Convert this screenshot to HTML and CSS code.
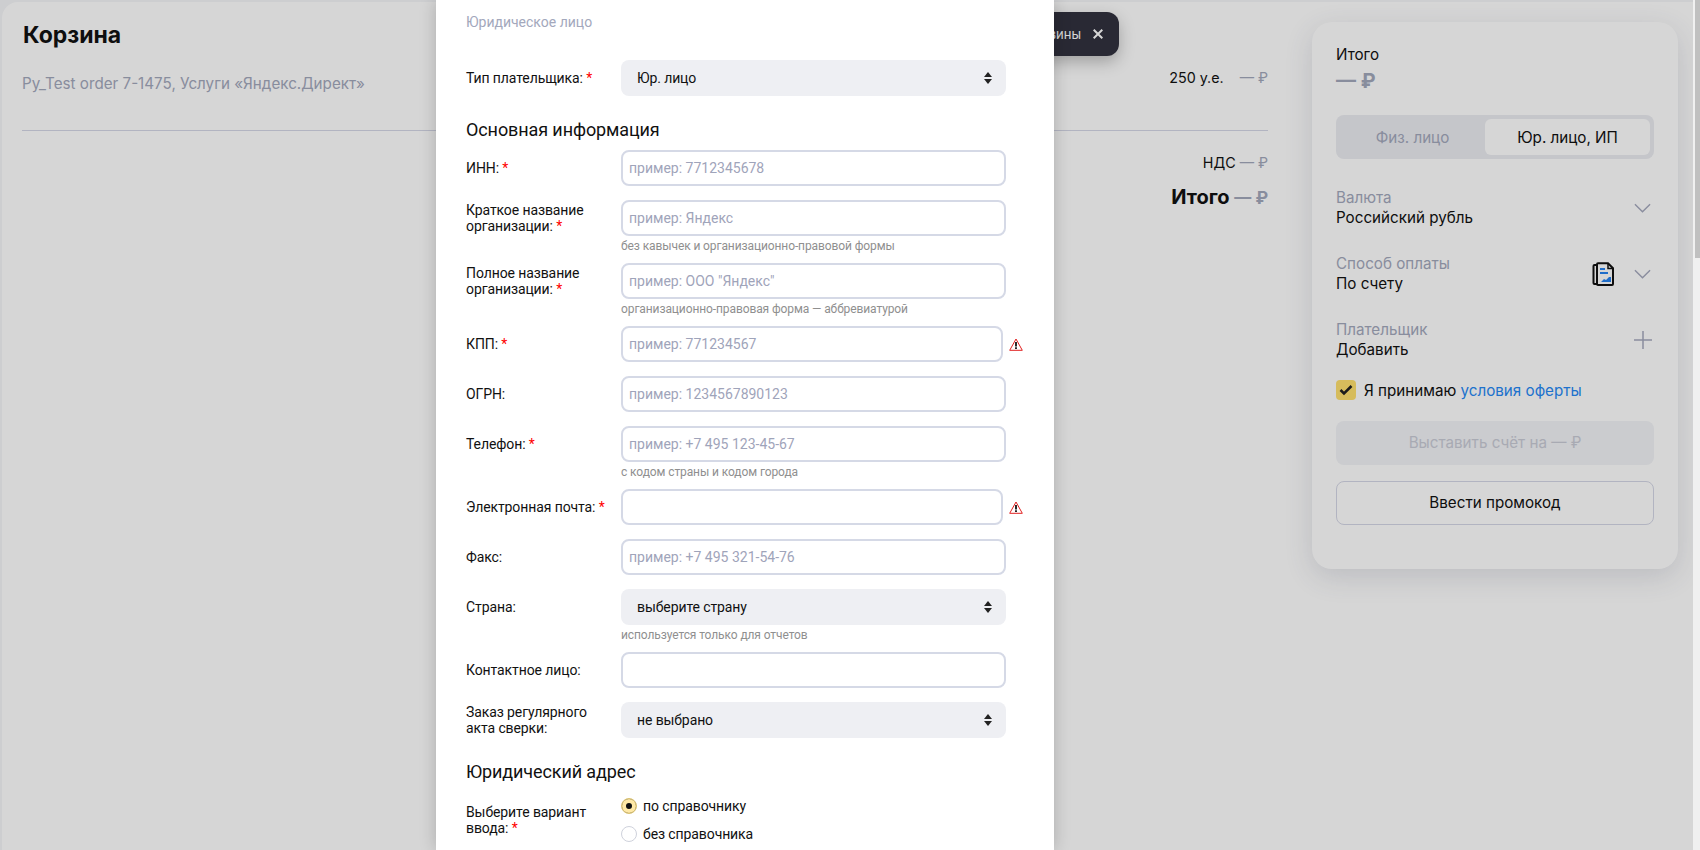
FILE: index.html
```html
<!DOCTYPE html>
<html lang="ru">
<head>
    <meta charset="UTF-8">
    <title>Корзина</title>
    <link rel="stylesheet" href="styles.css">
</head>
<body>
    <div class="page">
        <main class="cart">
            <section class="order">
                <h1>Корзина</h1>
                <div class="order-line">
                    <span class="order-name">Py_Test order 7-1475, Услуги «Яндекс.Директ»</span>
                    <span class="order-qty">250 у.е.</span>
                    <span class="muted">— ₽</span>
                </div>
                <div class="order-vat">НДС <span class="muted">— ₽</span></div>
                <div class="order-total">Итого <span class="muted">— ₽</span></div>
            </section>
            <aside class="summary">
                <div class="summary-title">Итого</div>
                <div class="summary-sum">— ₽</div>
                <div class="tabs">
                    <div class="tab">Физ. лицо</div>
                    <div class="tab tab-active">Юр. лицо, ИП</div>
                </div>
                <div class="option option-first">
                    <div class="option-text">
                        <div class="option-label">Валюта</div>
                        <div>Российский рубль</div>
                    </div>
                    <svg class="chevron" viewBox="0 0 18 10"><path d="M1 1l8 8 8-8" fill="none" stroke="#a5a9bd" stroke-width="1.5"/></svg>
                </div>
                <div class="option">
                    <div class="option-text">
                        <div class="option-label">Способ оплаты</div>
                        <div>По счету</div>
                    </div>
                    <svg class="doc-icon" viewBox="0 0 22 24">
                        <path d="M5 3H2.500a1 1 0 0 0-1 1v17a1 1 0 0 0 1 1H5" fill="none" stroke="#111" stroke-width="2"/>
                        <path d="M5 2.200a1 1 0 0 1 1-1h10l5 5v15.800a1 1 0 0 1-1 1H6a1 1 0 0 1-1-1z" fill="#fff" stroke="#111" stroke-width="2"/>
                        <path d="M16 1.500v5h5" fill="none" stroke="#111" stroke-width="1.500"/>
                        <path d="M8 6h5v2H8zM8 10h8v2H8z" fill="#2682f0"/>
                        <path d="M9 20l3-3 2 1 3-3 2 0v5z" fill="#2682f0"/>
                    </svg>
                    <svg class="chevron" viewBox="0 0 18 10"><path d="M1 1l8 8 8-8" fill="none" stroke="#a5a9bd" stroke-width="1.5"/></svg>
                </div>
                <div class="option">
                    <div class="option-text">
                        <div class="option-label">Плательщик</div>
                        <div>Добавить</div>
                    </div>
                    <svg class="plus" viewBox="0 0 18 18"><path d="M9 0v18M0 9h18" fill="none" stroke="#a5a9bd" stroke-width="1.5"/></svg>
                </div>
                <div class="offer">
                    <span class="check">
                        <svg viewBox="0 0 14 12"><path d="M1.500 6l3.500 3.500 7.500-7.500" fill="none" stroke="#222" stroke-width="2.500"/></svg>
                    </span>
                    <span>Я принимаю <a href="#" class="link">условия оферты</a></span>
                </div>
                <button class="btn btn-disabled" type="button">Выставить счёт на — ₽</button>
                <button class="btn btn-outline" type="button">Ввести промокод</button>
            </aside>
        </main>
        <div class="toast">
            <span>корзины</span>
            <svg class="toast-close" viewBox="0 0 10 10"><path d="M.7.7l8.600 8.600M9.300.7L.7 9.300" fill="none" stroke="#fff" stroke-width="2"/></svg>
        </div>
        <div class="overlay"></div>
        <div class="modal">
            <div class="modal-type">Юридическое лицо</div>

            <form class="payer-form">
                <div class="row row-top">
                    <label>Тип плательщика: <b>*</b></label>
                    <div class="select">Юр. лицо</div>
                </div>

                <h2>Основная информация</h2>

                <div class="row">
                    <label>ИНН: <b>*</b></label>
                    <input type="text" placeholder="пример: 7712345678">
                </div>
                <div class="row">
                    <label>Краткое название организации: <b>*</b></label>
                    <input type="text" placeholder="пример: Яндекс">
                    <div class="hint">без кавычек и организационно-правовой формы</div>
                </div>
                <div class="row">
                    <label>Полное название организации: <b>*</b></label>
                    <input type="text" placeholder='пример: ООО "Яндекс"'>
                    <div class="hint">организационно-правовая форма — аббревиатурой</div>
                </div>
                <div class="row row-error">
                    <label>КПП: <b>*</b></label>
                    <input type="text" placeholder="пример: 771234567">
                    <svg class="warn" viewBox="0 0 14 13"><path d="M7 1L13.300 12.300H.7z" fill="#fff" stroke="#e02020" stroke-linejoin="round"/><path d="M6.100 4h1.800v4.500H6.100zM6.100 9.300h1.800v1.800H6.100z" fill="#111"/></svg>
                </div>
                <div class="row">
                    <label>ОГРН:</label>
                    <input type="text" placeholder="пример: 1234567890123">
                </div>
                <div class="row">
                    <label>Телефон: <b>*</b></label>
                    <input type="text" placeholder="пример: +7 495 123-45-67">
                    <div class="hint">с кодом страны и кодом города</div>
                </div>
                <div class="row row-error">
                    <label>Электронная почта: <b>*</b></label>
                    <input type="text">
                    <svg class="warn" viewBox="0 0 14 13"><path d="M7 1L13.300 12.300H.7z" fill="#fff" stroke="#e02020" stroke-linejoin="round"/><path d="M6.100 4h1.800v4.500H6.100zM6.100 9.300h1.800v1.800H6.100z" fill="#111"/></svg>
                </div>
                <div class="row">
                    <label>Факс:</label>
                    <input type="text" placeholder="пример: +7 495 321-54-76">
                </div>
                <div class="row">
                    <label>Страна:</label>
                    <div class="select">выберите страну</div>
                    <div class="hint">используется только для отчетов</div>
                </div>
                <div class="row">
                    <label>Контактное лицо:</label>
                    <input type="text">
                </div>
                <div class="row">
                    <label>Заказ регулярного акта сверки:</label>
                    <div class="select">не выбрано</div>
                </div>

                <h2>Юридический адрес</h2>

                <div class="row row-radio">
                    <label>Выберите вариант ввода: <b>*</b></label>
                    <div class="radios">
                        <div class="radio radio-on"><span class="radio-dot"></span>по справочнику</div>
                        <div class="radio"><span class="radio-dot"></span>без справочника</div>
                    </div>
                </div>
            </form>
        </div>
        <div class="scrollbar"><div class="scrollbar-thumb"></div></div>
    </div>
</body>
</html>
```

FILE: styles.css
```css
* {
    box-sizing: border-box;
}
html, body {
    margin: 0;
    height: 100%;
    overflow: hidden;
}
body {
    font-family: Inter, "Noto Sans", sans-serif;
    font-size: 15.2px;
    color: #111;
}
.page {
    position: relative;
    width: 1700px;
    height: 850px;
    padding: 2px 7px 0 2px;
    background: #f5f6f8;
    overflow: hidden;
}
.cart {
    display: flex;
    height: 848px;
    padding: 20px 14px 0 20px;
    background: #fff;
    border-radius: 16px 0 0 0;
}
.order {
    width: 1246px;
    flex: none;
}
.order h1 {
    margin: 0;
    padding-left: 1px;
    font-size: 23px;
    line-height: 26px;
    font-weight: 700;
}
.order-line {
    display: flex;
    align-items: flex-start;
    gap: 16px;
    height: 42px;
    margin-top: 16px;
    margin-bottom: 24px;
    font-size: 14.300px;
    line-height: 24px;
}
.order-name {
    flex: 1;
    padding-top: 8px;
    font-size: 15.2px;
    color: #a3a8bc;
}
.order-qty {
    padding-top: 2px;
}
.order-line .muted {
    padding-top: 2px;
}
.muted {
    color: #a3a8bc;
}
.order-vat, .order-total {
    text-align: right;
}
.order-vat {
    border-top: 1px solid #d5d7e6;
    padding-top: 22px;
    font-size: 14.300px;
    line-height: 20px;
}
.order-total {
    margin-top: 12px;
    font-size: 20px;
    line-height: 24px;
    font-weight: 700;
}
.order-total .muted {
    font-size: 17px;
}
.summary {
    flex: none;
    width: 366px;
    height: 547px;
    margin-left: 44px;
    padding: 23px 24px 22px;
    background: #fff;
    border-radius: 20px;
    box-shadow: 0 8px 28px rgba(60, 70, 100, .16);
}
.summary-title {
    line-height: 20px;
}
.summary-sum {
    margin-top: 4px;
    font-size: 20px;
    line-height: 24px;
    font-weight: 700;
    color: #a3a8bc;
}
.tabs {
    display: flex;
    height: 44px;
    margin-top: 22px;
    padding: 4px;
    background: #ebecf1;
    border-radius: 8px;
}
.tab {
    flex: 1;
    display: flex;
    align-items: center;
    justify-content: center;
    color: #a3a8bc;
    border-radius: 6px;
}
.tab-active {
    flex: none;
    width: 165px;
    background: #fff;
    color: #111;
}
.option {
    display: flex;
    align-items: center;
    margin-top: 22px;
    height: 44px;
    line-height: 20px;
}
.option-first {
    margin-top: 27px;
}
.option-text {
    flex: 1;
}
.option-label {
    color: #a3a8bc;
}
.chevron {
    width: 17px;
    height: 10px;
    margin-right: 3px;
}
.doc-icon {
    width: 22px;
    height: 24px;
    margin-right: 20px;
}
.plus {
    width: 18px;
    height: 18px;
    margin-right: 2px;
}
.offer {
    display: flex;
    align-items: center;
    gap: 8px;
    margin-top: 18px;
}
.check {
    display: flex;
    align-items: center;
    justify-content: center;
    width: 20px;
    height: 20px;
    background: #ffe06e;
    border-radius: 4px;
}
.check svg {
    width: 14px;
    height: 12px;
}
.link {
    color: #2688f5;
    text-decoration: none;
}
.btn {
    display: block;
    width: 100%;
    height: 44px;
    margin-top: 16px;
    padding-bottom: 2px;
    font-family: inherit;
    font-size: 15.2px;
    border-radius: 8px;
}
.btn-disabled {
    margin-top: 21px;
    background: #f2f3f7;
    border: none;
    color: #c9cbd6;
}
.btn-outline {
    background: #fff;
    border: 1px solid #d5d7e6;
    color: #111;
}
.toast {
    position: absolute;
    top: 12px;
    left: 900px;
    width: 219px;
    height: 44px;
    display: flex;
    align-items: center;
    justify-content: flex-end;
    gap: 12px;
    padding-right: 16px;
    font-size: 13px;
    color: #fff;
    background: #32323f;
    border-radius: 12px;
    box-shadow: 0 6px 16px rgba(0, 0, 0, .25);
}
.toast-close {
    width: 10px;
    height: 10px;
}
.overlay {
    position: absolute;
    inset: 0;
    background: rgba(0, 0, 0, .16);
}
.modal {
    position: absolute;
    top: 0;
    left: 436px;
    width: 618px;
    height: 850px;
    padding: 13px 30px 0;
    font-family: Roboto, "Noto Sans", sans-serif;
    background: #fff;
    box-shadow: 0 0 16px rgba(0, 0, 0, .2);
    overflow: hidden;
}
.modal-type {
    font-size: 14px;
    line-height: 18px;
    color: #a3a8bc;
}
.payer-form {
    margin-top: 29px;
    font-size: 14px;
    letter-spacing: -.1px;
}
.payer-form h2 {
    margin: 20px 0 6px;
    font-size: 18px;
    line-height: 28px;
    font-weight: 400;
}
.row {
    display: grid;
    grid-template-columns: 155px 385px 1fr;
    align-items: center;
    margin-bottom: 14px;
}
.row label {
    line-height: 16px;
    padding-right: 12px;
}
.row label b {
    color: #f00;
    font-weight: 400;
}
.row input {
    width: 100%;
    height: 36px;
    padding: 0 6px;
    font-family: inherit;
    font-size: 14px;
    background: #fff;
    border: 2px solid #d5d9e6;
    border-radius: 8px;
}
.row input::placeholder {
    color: #9fa4ba;
}
.row-error {
    grid-template-columns: 155px 382px 1fr;
}
.warn {
    width: 14px;
    height: 13px;
    margin-left: 6px;
}
.select {
    position: relative;
    display: flex;
    align-items: center;
    height: 36px;
    padding: 0 16px;
    font-size: 14px;
    background: #eeeff3;
    border-radius: 8px;
}
.select::before, .select::after {
    content: "";
    position: absolute;
    right: 14px;
    width: 0;
    height: 0;
    border-left: 4px solid transparent;
    border-right: 4px solid transparent;
}
.select::before {
    top: 12px;
    border-bottom: 5px solid #222;
}
.select::after {
    top: 19px;
    border-top: 5px solid #222;
}
.hint {
    grid-column: 2 / 4;
    height: 13px;
    margin-top: 4px;
    margin-bottom: -4px;
    font-size: 12px;
    letter-spacing: -.1px;
    line-height: 13px;
    color: #8f8f8f;
}
.row-radio {
    align-items: start;
}
.row-radio label {
    margin-top: 12px;
}
.radio {
    display: flex;
    align-items: center;
    gap: 6px;
    height: 28px;
    font-size: 14px;
}
.radio-dot {
    width: 16px;
    height: 16px;
    background: #fff;
    border: 1px solid #cfd2dc;
    border-radius: 50%;
}
.radio-on .radio-dot {
    background: #ffe9a6;
    border-color: #d8c070;
    box-shadow: inset 0 0 0 4px #ffe9a6, inset 0 0 0 8px #111;
}
.scrollbar {
    position: absolute;
    top: 0;
    right: 0;
    width: 7px;
    height: 850px;
    padding-left: 2px;
    background: #f0f0f0;
}
.scrollbar-thumb {
    height: 258px;
    background: #c0c0c0;
}
```
